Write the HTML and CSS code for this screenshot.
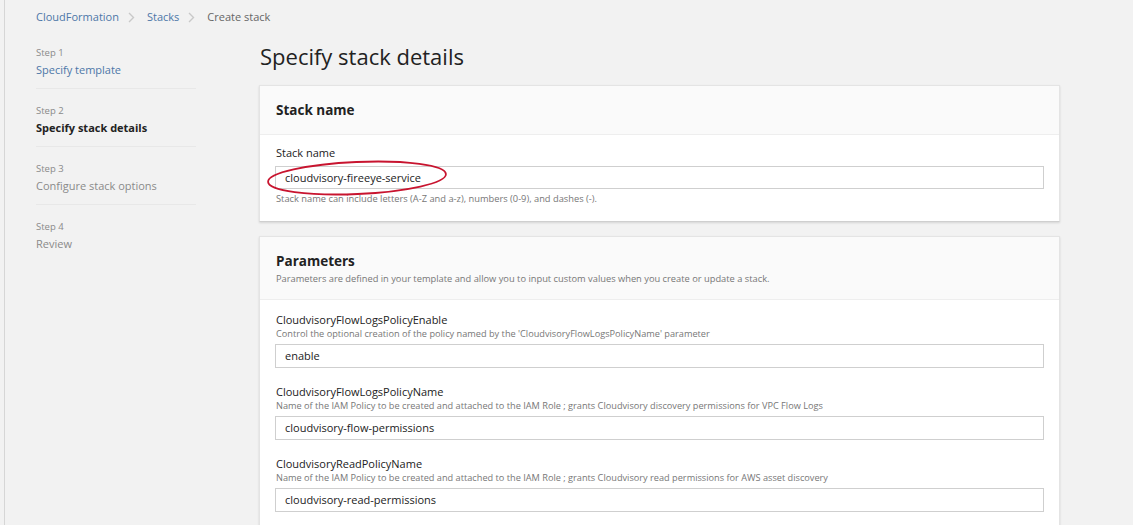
FILE: index.html
```html
<!DOCTYPE html>
<html lang="en">
<head>
<meta charset="utf-8">
<title>Create stack</title>
<link rel="stylesheet" href="styles.css">
</head>
<body>
<div class="page">
  <nav class="crumbs">
    <a class="crumb-link">CloudFormation</a>
    <svg class="sep" width="7" height="11" viewBox="0 0 7 11"><polyline points="1,1 5.5,5.5 1,10" fill="none" stroke="#c9c9c9" stroke-width="1.4"/></svg>
    <a class="crumb-link">Stacks</a>
    <svg class="sep" width="7" height="11" viewBox="0 0 7 11"><polyline points="1,1 5.5,5.5 1,10" fill="none" stroke="#c9c9c9" stroke-width="1.4"/></svg>
    <span class="crumb-current">Create stack</span>
  </nav>
  <div class="layout">
    <aside class="steps">
      <div class="step">
        <div class="step-num">Step 1</div>
        <div class="step-name link">Specify template</div>
      </div>
      <div class="step">
        <div class="step-num">Step 2</div>
        <div class="step-name active">Specify stack details</div>
      </div>
      <div class="step">
        <div class="step-num">Step 3</div>
        <div class="step-name muted">Configure stack options</div>
      </div>
      <div class="step last">
        <div class="step-num">Step 4</div>
        <div class="step-name muted">Review</div>
      </div>
    </aside>
    <main class="content">
      <h1 class="title">Specify stack details</h1>

      <section class="card">
        <header class="card-head">
          <h2 class="card-title">Stack name</h2>
        </header>
        <div class="card-body first">
          <div class="field">
            <label class="label">Stack name</label>
            <div class="input-wrap">
              <div class="input">cloudvisory-fireeye-service</div>
              <svg class="ellipse" width="190" height="40" viewBox="0 0 190 40">
                <ellipse cx="95" cy="20" rx="89" ry="16" fill="none" stroke="#c8142f" stroke-width="1.8" transform="rotate(-2.5 95 20)"/>
              </svg>
            </div>
            <div class="help">Stack name can include letters (A-Z and a-z), numbers (0-9), and dashes (-).</div>
          </div>
        </div>
      </section>

      <section class="card">
        <header class="card-head">
          <h2 class="card-title">Parameters</h2>
          <p class="card-desc">Parameters are defined in your template and allow you to input custom values when you create or update a stack.</p>
        </header>
        <div class="card-body params">
          <div class="field">
            <label class="plabel">CloudvisoryFlowLogsPolicyEnable</label>
            <div class="pdesc">Control the optional creation of the policy named by the 'CloudvisoryFlowLogsPolicyName' parameter</div>
            <div class="input p">enable</div>
          </div>
          <div class="field">
            <label class="plabel">CloudvisoryFlowLogsPolicyName</label>
            <div class="pdesc">Name of the IAM Policy to be created and attached to the IAM Role ; grants Cloudvisory discovery permissions for VPC Flow Logs</div>
            <div class="input p">cloudvisory-flow-permissions</div>
          </div>
          <div class="field">
            <label class="plabel">CloudvisoryReadPolicyName</label>
            <div class="pdesc">Name of the IAM Policy to be created and attached to the IAM Role ; grants Cloudvisory read permissions for AWS asset discovery</div>
            <div class="input p">cloudvisory-read-permissions</div>
          </div>
        </div>
      </section>
    </main>
  </div>
</div>
</body>
</html>
```
FILE: styles.css
```css
html, body {
  margin: 0;
  padding: 0;
  height: 100%;
  overflow: hidden;
}
body {
  background: #f2f2f2;
  font-family: "Open Sans", "Liberation Sans", sans-serif;
  color: #222;
}
.page {
  margin-left: 4px;
  border-left: 1px solid #d6d6d6;
  padding-left: 31px;
  min-height: 100%;
  box-sizing: border-box;
}
.crumbs {
  padding-top: 9px;
  height: 16px;
  line-height: 16px;
  font-size: 11px;
  display: flex;
  align-items: center;
}
.crumb-link { color: #4d77a8; }
.crumb-current { color: #666; }
.sep {
  margin: 0 12px 0 9px;
  flex: none;
}
.layout {
  display: flex;
}
.steps {
  width: 223px;
  flex: none;
  padding-top: 21px;
}
.step {
  width: 160px;
  padding-bottom: 9px;
  border-bottom: 1px solid #e8e8e8;
  margin-bottom: 15px;
}
.step.last { border-bottom: none; }
.step-num {
  font-size: 9.5px;
  line-height: 14px;
  color: #8a8a8a;
}
.step-name {
  font-size: 11px;
  line-height: 18px;
  margin-top: 1px;
}
.step-name.link { color: #4d77a8; }
.step-name.active { font-weight: 700; color: #222; }
.step-name.muted { color: #8a8a8a; }

.content {
  width: 801px;
  flex: none;
  padding-top: 17px;
}
.title {
  margin: 0 0 15px;
  font-size: 22px;
  line-height: 28px;
  font-weight: 400;
  color: #222;
  padding-left: 1px;
}
.card {
  background: #fff;
  border: 1px solid #e4e4e4;
  border-bottom: 1px solid #cfcfcf;
  box-shadow: 0 1px 2px rgba(0,0,0,0.12);
  margin-bottom: 14px;
}
.card-head {
  background: #fafafa;
  border-bottom: 1px solid #eeeeee;
  padding: 14px 16px;
}
.card-title {
  margin: 0;
  font-size: 13.5px;
  line-height: 20px;
  font-weight: 700;
  color: #222;
}
.card-desc {
  margin: 2px 0 0;
  font-size: 9.3px;
  line-height: 12px;
  color: #777;
}
.card-body {
  padding: 10px 15px 16px;
}
.card-body.params {
  padding-top: 12px;
  padding-bottom: 20px;
}
.label {
  display: block;
  font-size: 11px;
  line-height: 16px;
  margin-bottom: 5px;
  padding-left: 1px;
}
.input-wrap {
  position: relative;
}
.input {
  border: 1px solid #cfcfcf;
  height: 21px;
  line-height: 21px;
  padding-left: 9px;
  font-size: 11px;
  color: #222;
  background: #fff;
}
.input.p { height: 22px; line-height: 22px; }
.ellipse {
  position: absolute;
  left: -13px;
  top: -8px;
}
.help {
  margin-top: 4px;
  font-size: 9.3px;
  line-height: 12px;
  color: #777;
  padding-left: 1px;
}
.params .field + .field { margin-top: 16px; }
.plabel {
  display: block;
  font-size: 11px;
  line-height: 16px;
  padding-left: 1px;
}
.pdesc {
  font-size: 9.2px;
  line-height: 12px;
  color: #777;
  margin: 0 0 4px;
  padding-left: 1px;
}
```
